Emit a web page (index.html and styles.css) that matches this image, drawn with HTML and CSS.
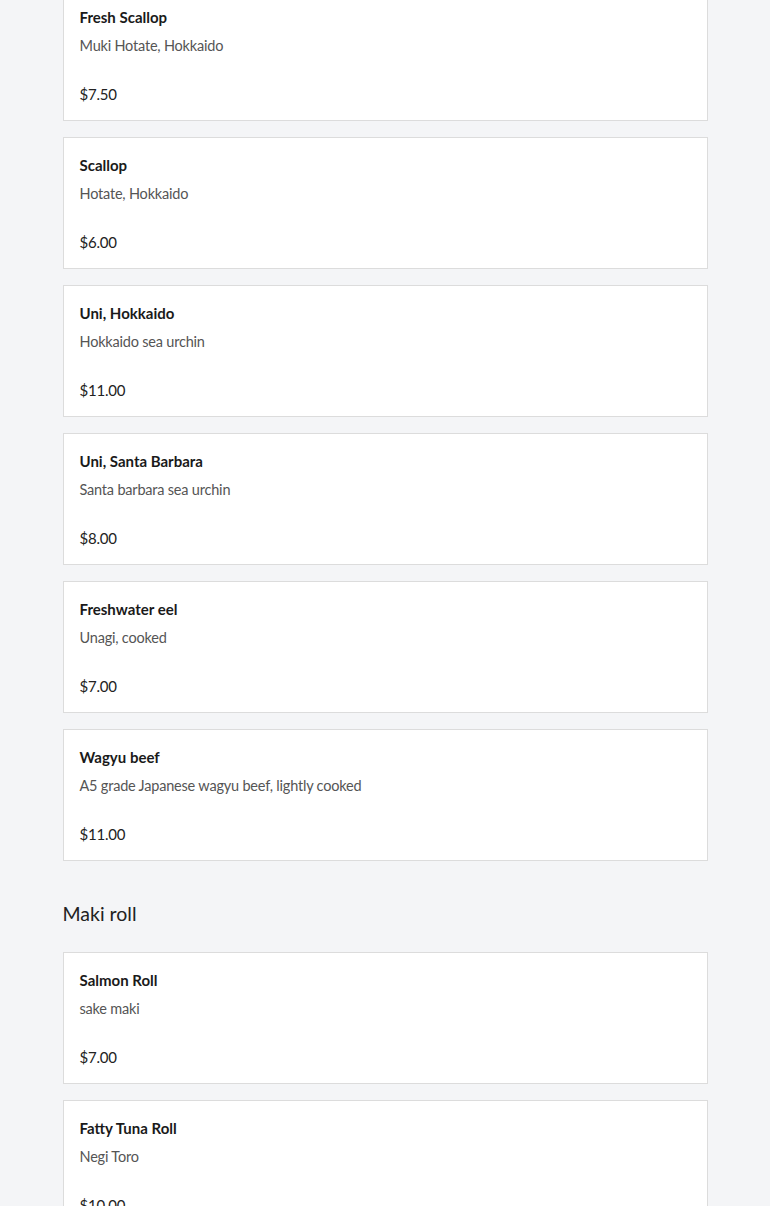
FILE: index.html
```html
<!DOCTYPE html>
<html lang="en">
<head>
<meta charset="utf-8">
<title>Menu</title>
<link rel="stylesheet" href="styles.css">
</head>
<body>
<main class="menu">
  <section class="section">
    <div class="item">
      <div class="item-name">Fresh Scallop</div>
      <div class="item-desc">Muki Hotate, Hokkaido</div>
      <div class="item-price">$7.50</div>
    </div>
    <div class="item">
      <div class="item-name">Scallop</div>
      <div class="item-desc">Hotate, Hokkaido</div>
      <div class="item-price">$6.00</div>
    </div>
    <div class="item">
      <div class="item-name">Uni, Hokkaido</div>
      <div class="item-desc">Hokkaido sea urchin</div>
      <div class="item-price">$11.00</div>
    </div>
    <div class="item">
      <div class="item-name">Uni, Santa Barbara</div>
      <div class="item-desc">Santa barbara sea urchin</div>
      <div class="item-price">$8.00</div>
    </div>
    <div class="item">
      <div class="item-name">Freshwater eel</div>
      <div class="item-desc">Unagi, cooked</div>
      <div class="item-price">$7.00</div>
    </div>
    <div class="item">
      <div class="item-name">Wagyu beef</div>
      <div class="item-desc">A5 grade Japanese wagyu beef, lightly cooked</div>
      <div class="item-price">$11.00</div>
    </div>
  </section>
  <section class="section">
    <h2 class="section-title">Maki roll</h2>
    <div class="item">
      <div class="item-name">Salmon Roll</div>
      <div class="item-desc">sake maki</div>
      <div class="item-price">$7.00</div>
    </div>
    <div class="item">
      <div class="item-name">Fatty Tuna Roll</div>
      <div class="item-desc">Negi Toro</div>
      <div class="item-price">$10.00</div>
    </div>
  </section>
</main>
</body>
</html>
```
FILE: styles.css
```css
html, body {
  margin: 0;
  padding: 0;
}
body {
  background: #f4f5f7;
  font-family: Lato, "Liberation Sans", sans-serif;
  color: #222;
  overflow: hidden;
}
.menu {
  width: 645px;
  margin: -11px auto 0;
}
.section {
  display: flex;
  flex-direction: column;
  gap: 16px;
}
.section + .section {
  margin-top: 41px;
}
.section-title {
  margin: 0 0 10px;
  font-size: 19.5px;
  line-height: 24px;
  font-weight: 400;
  color: #222;
}
.item {
  background: #fff;
  border: 1px solid #dcdcdc;
  padding: 16px 16px 15px;
  display: flex;
  flex-direction: column;
}
.item-name {
  font-size: 15px;
  line-height: 22px;
  font-weight: 700;
  color: #1a1a1a;
}
.item-desc {
  margin-top: 7px;
  font-size: 14.5px;
  letter-spacing: -0.2px;
  line-height: 22px;
  color: #555;
}
.item-price {
  margin-top: 26px;
  font-size: 15px;
  letter-spacing: -0.2px;
  line-height: 22px;
  color: #222;
}
```
